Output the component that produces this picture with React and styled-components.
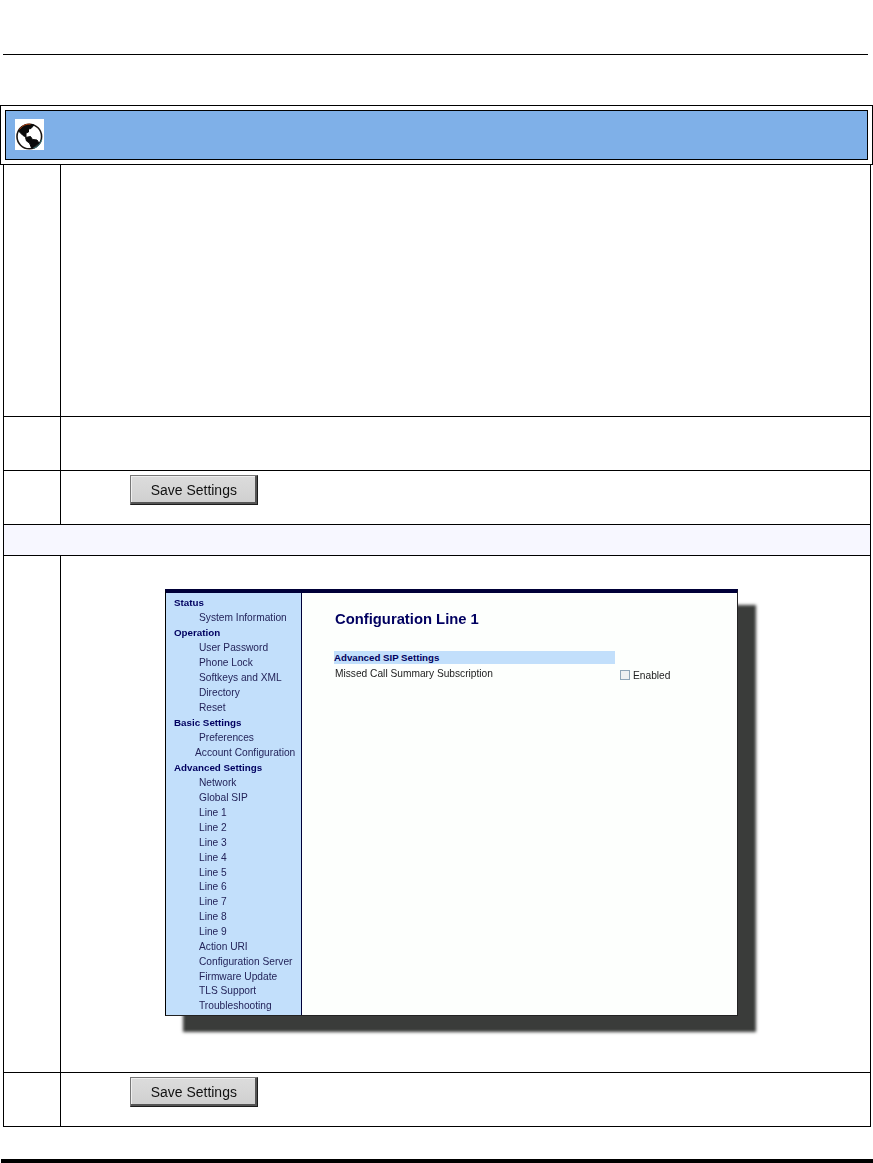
import React from 'react';
import styled, { createGlobalStyle } from 'styled-components';

const GlobalStyle = createGlobalStyle`
  html, body { margin: 0; padding: 0; background: #fff; }
  * { box-sizing: border-box; }
`;

const Page = styled.div`
  width: 873px;
  height: 1163px;
  display: flex;
  flex-direction: column;
  overflow: hidden;
  background: #fff;
  font-family: "Liberation Sans", Arial, sans-serif;
`;

const TopRule = styled.div`
  height: 1px;
  margin: 54px 5px 50px 3px;
  background: #000;
`;

const BannerFrame = styled.div`
  height: 60px;
  padding: 4px;
  border: 1px solid #000;
`;

const Banner = styled.div`
  height: 50px;
  padding: 0 0 1px 9px;
  display: flex;
  align-items: center;
  background: #7fb0e8;
  border: 1px solid #000;
`;

const Globe = styled.svg`
  width: 29px;
  height: 31px;
  display: block;
`;

const Table = styled.div`
  width: 868px;
  margin-left: 3px;
  border-left: 1px solid #000;
  border-right: 1px solid #000;
  border-bottom: 1px solid #000;
`;

const Row = styled.div`
  height: ${props => props.$height}px;
  display: grid;
  grid-template-columns: 57px 1fr;
  border-bottom: 1px solid #000;
  &:last-child { border-bottom: 0; }
`;

const StepCell = styled.div`
  border-right: 1px solid #000;
`;

const BodyCell = styled.div`
  min-width: 0;
  padding: ${props => props.$padding || '0'};
`;

const SpanRow = styled.div`
  height: 31px;
  background: #f7f7ff;
  border-bottom: 1px solid #000;
`;

const SaveButton = styled.button`
  display: flex;
  align-items: center;
  justify-content: center;
  width: 128px;
  height: 30px;
  padding: 0 0 1px;
  background: linear-gradient(#dcdcdc, #cfcfcf);
  border: 1px solid;
  border-color: #777 #1c1c1c #1c1c1c #777;
  box-shadow: inset -2px -2px 0 #555, inset 1px 1px 0 #efefef;
  color: #111;
  font-family: "Liberation Sans", Arial, sans-serif;
  font-size: 15.5px;
  filter: blur(0.45px);
`;

const SaveLabel = styled.span`
  display: block;
  transform: scaleX(0.9);
`;

const Shot = styled.div`
  width: 573px;
  height: 427px;
  display: grid;
  grid-template-columns: 136px 1fr;
  background: #fdfffd;
  border-top: 4px solid #000038;
  border-left: 1px solid #000;
  border-right: 1px solid #222;
  border-bottom: 1px solid #222;
  box-shadow: 18px 16px 3px #3a3c3a;
  color: #222;
  font-size: 10.2px;
`;

const Nav = styled.nav`
  padding-top: 1.5px;
  background: #c2dffb;
  border-right: 1px solid #000038;
`;

const NavLine = styled.div`
  height: ${props => (props.$head ? 15.5 : 14.87)}px;
  line-height: 15px;
  white-space: nowrap;
  padding-left: ${props => props.$indent}px;
  font-size: ${props => (props.$head ? 9.8 : 10.2)}px;
  font-weight: ${props => (props.$head ? 700 : 400)};
  color: ${props => (props.$head ? '#000060' : '#24245a')};
  filter: blur(0.3px);
`;

const Pane = styled.div`
  padding: 17px 0 0 32px;
`;

const PaneTitle = styled.h1`
  margin: 0 0 23px 1px;
  height: 18px;
  line-height: 18px;
  font-size: 14.8px;
  font-weight: 700;
  color: #000060;
  filter: blur(0.25px);
`;

const SectionBand = styled.div`
  width: 281px;
  height: 13px;
  line-height: 14px;
  background: #c2dffb;
  font-size: 9.7px;
  font-weight: 700;
  color: #000060;
`;

const SettingRow = styled.div`
  display: flex;
  margin-top: 3px;
  filter: blur(0.3px);
`;

const SettingLabel = styled.span`
  width: 286px;
  height: 14px;
  line-height: 14px;
  padding-left: 1px;
`;

const Enabled = styled.label`
  display: flex;
  align-items: center;
  gap: 3px;
  margin-top: 1px;
  height: 14px;
`;

const Check = styled.span`
  width: 10px;
  height: 10px;
  background: #eef1f2;
  border: 1px solid #8fa6b8;
`;

const BottomBar = styled.div`
  height: 4px;
  margin: 32px 0 0 1px;
  background: #000;
`;

const navItems = [
  ['Status', true], ['System Information'],
  ['Operation', true], ['User Password'], ['Phone Lock'], ['Softkeys and XML'], ['Directory'], ['Reset'],
  ['Basic Settings', true], ['Preferences'], ['Account Configuration', false, 29],
  ['Advanced Settings', true], ['Network'], ['Global SIP'],
  ['Line 1'], ['Line 2'], ['Line 3'], ['Line 4'], ['Line 5'], ['Line 6'], ['Line 7'], ['Line 8'], ['Line 9'],
  ['Action URI'], ['Configuration Server'], ['Firmware Update'], ['TLS Support'], ['Troubleshooting'],
];

const GlobeIcon = () => (
  <Globe viewBox="0 0 29 31">
    <rect width="29" height="31" fill="#fff" />
    <circle cx="14.3" cy="17.5" r="12.3" fill="#fff" stroke="#1a1512" strokeWidth="1.6" />
    <path d="M5.5 9 C9 5.5 14 5 19 6 L16 9.5 L13.5 10 L13.5 13 L11 14 L11 18 L8 16.5 L3.5 12 Z" fill="#0a0a0a" stroke="#0a0a0a" strokeWidth="1" strokeLinejoin="round" />
    <path d="M10.5 18.5 L15.5 17.5 L17.5 20.5 L22 21 L24 24 L20 27.5 L16.5 29 L14.5 24 L11.5 22 Z" fill="#0a0a0a" stroke="#0a0a0a" strokeWidth="1" strokeLinejoin="round" />
    <path d="M4.5 10.5 C7 6.5 11 5 15.5 5.2" fill="none" stroke="#b8420f" strokeWidth="1" />
    <path d="M18.5 29.3 C22.5 28 25.5 25 26.8 20.5" fill="none" stroke="#3a7d80" strokeWidth="1" />
  </Globe>
);

const App = () => (
  <Page>
    <GlobalStyle />
    <TopRule />
    <BannerFrame>
      <Banner>
        <GlobeIcon />
      </Banner>
    </BannerFrame>
    <Table>
      <Row $height={252}>
        <StepCell />
        <BodyCell />
      </Row>
      <Row $height={54}>
        <StepCell />
        <BodyCell />
      </Row>
      <Row $height={54}>
        <StepCell />
        <BodyCell $padding="4px 0 0 69px">
          <SaveButton type="button"><SaveLabel>Save Settings</SaveLabel></SaveButton>
        </BodyCell>
      </Row>
      <SpanRow />
      <Row $height={517}>
        <StepCell />
        <BodyCell $padding="33px 0 0 104px">
          <Shot>
            <Nav>
              {navItems.map(([label, head, indent]) => (
                <NavLine key={label} $head={head} $indent={indent || (head ? 8 : 33)}>
                  {label}
                </NavLine>
              ))}
            </Nav>
            <Pane>
              <PaneTitle>Configuration Line 1</PaneTitle>
              <SectionBand>Advanced SIP Settings</SectionBand>
              <SettingRow>
                <SettingLabel>Missed Call Summary Subscription</SettingLabel>
                <Enabled>
                  <Check />
                  Enabled
                </Enabled>
              </SettingRow>
            </Pane>
          </Shot>
        </BodyCell>
      </Row>
      <Row $height={53}>
        <StepCell />
        <BodyCell $padding="4px 0 0 69px">
          <SaveButton type="button"><SaveLabel>Save Settings</SaveLabel></SaveButton>
        </BodyCell>
      </Row>
    </Table>
    <BottomBar />
  </Page>
);

export default App;
